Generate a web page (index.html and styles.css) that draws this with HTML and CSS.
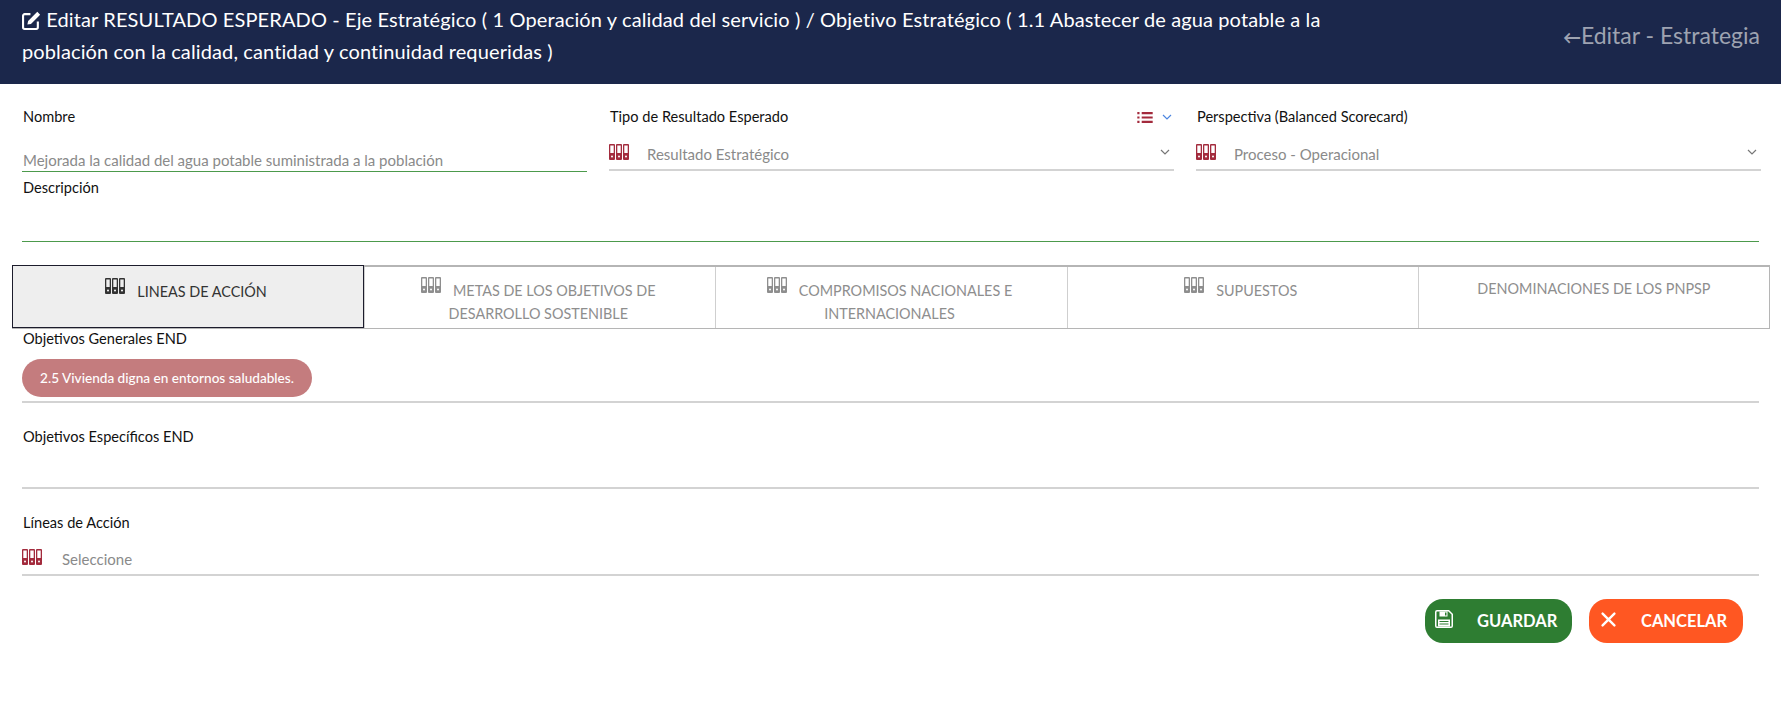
FILE: index.html
```html
<!DOCTYPE html>
<html lang="es">

<head>
    <meta charset="UTF-8">
    <meta name="viewport" content="width=device-width, initial-scale=1.0">
    <title>Editar Resultado Esperado</title>

    <link rel="stylesheet" href="styles.css">
</head>

<body>

    <svg class="sprite" width="0" height="0">
        <symbol id="binders" viewBox="0 0 20 16">
            <path d="M1 0h4a1 1 0 0 1 1 1v14a1 1 0 0 1-1 1H1a1 1 0 0 1-1-1V1a1 1 0 0 1 1-1zm.3 1.500V9h3.400V1.500zM8 0h4a1 1 0 0 1 1 1v14a1 1 0 0 1-1 1H8a1 1 0 0 1-1-1V1a1 1 0 0 1 1-1zm.3 1.500V9h3.400V1.500zM15 0h4a1 1 0 0 1 1 1v14a1 1 0 0 1-1 1h-4a1 1 0 0 1-1-1V1a1 1 0 0 1 1-1zm.3 1.500V9h3.400V1.500z" fill-rule="evenodd" />
            <circle cx="3" cy="12.500" r="1" fill="#fff" />
            <circle cx="10" cy="12.500" r="1" fill="#fff" />
            <circle cx="17" cy="12.500" r="1" fill="#fff" />
        </symbol>
        <symbol id="chevron" viewBox="0 0 10 6">
            <path d="M1 1l4 4 4-4" fill="none" stroke="currentColor" stroke-width="1.200" />
        </symbol>
    </svg>

    <header class="cabecera">
        <h1 class="titulo">
            <svg class="icono-editar" viewBox="0 0 18 18">
                <path d="M8 3H2.500A1.500 1.500 0 0 0 1 4.500v11A1.500 1.500 0 0 0 2.500 17h11a1.500 1.500 0 0 0 1.500-1.500V10" fill="none" stroke="currentColor" stroke-width="2" />
                <path d="M14.500.8l2.700 2.700L8.500 12.200l-3.400.7.700-3.400z" fill="currentColor" />
            </svg>
            Editar RESULTADO ESPERADO - Eje Estratégico ( 1 Operación y calidad del servicio ) / Objetivo Estratégico ( 1.1 Abastecer de agua potable a la población con la calidad, cantidad y continuidad requeridas )
        </h1>
        <a class="volver" href="#"><span class="flecha">←</span>Editar - Estrategia</a>
    </header>

    <main class="contenido">

        <section class="fila">
            <div class="campo">
                <label class="etiqueta">Nombre</label>
                <div class="valor valor-texto">Mejorada la calidad del agua potable suministrada a la población</div>
            </div>

            <div class="campo">
                <div class="etiqueta etiqueta-acciones">
                    <label>Tipo de Resultado Esperado</label>
                    <span class="acciones">
                        <svg class="icono-lista" viewBox="0 0 14 10">
                            <path d="M0 0h2v2H0zM4 0h10v2H4zM0 4h2v2H0zM4 4h10v2H4zM0 8h2v2H0zM4 8h10v2H4z" />
                        </svg>
                        <svg class="chevron chevron-azul"><use href="#chevron" /></svg>
                    </span>
                </div>
                <div class="valor valor-select">
                    <svg class="binders"><use href="#binders" /></svg>
                    <span class="valor-nombre">Resultado Estratégico</span>
                    <svg class="chevron"><use href="#chevron" /></svg>
                </div>
            </div>

            <div class="campo">
                <label class="etiqueta">Perspectiva (Balanced Scorecard)</label>
                <div class="valor valor-select">
                    <svg class="binders"><use href="#binders" /></svg>
                    <span class="valor-nombre">Proceso - Operacional</span>
                    <svg class="chevron"><use href="#chevron" /></svg>
                </div>
            </div>
        </section>

        <section class="descripcion">
            <label class="etiqueta">Descripción</label>
        </section>

        <nav class="pestanas">
            <a class="pestana activa" href="#"><svg class="binders"><use href="#binders" /></svg>LINEAS DE ACCIÓN</a>
            <a class="pestana" href="#"><svg class="binders"><use href="#binders" /></svg>METAS DE LOS OBJETIVOS DE DESARROLLO SOSTENIBLE</a>
            <a class="pestana" href="#"><svg class="binders"><use href="#binders" /></svg>COMPROMISOS NACIONALES E INTERNACIONALES</a>
            <a class="pestana" href="#"><svg class="binders"><use href="#binders" /></svg>SUPUESTOS</a>
            <a class="pestana" href="#">DENOMINACIONES DE LOS PNPSP</a>
        </nav>

        <section class="bloque bloque-generales">
            <label class="etiqueta">Objetivos Generales END</label>
            <div class="selector">
                <span class="chip">2.5 Vivienda digna en entornos saludables.</span>
            </div>
        </section>

        <section class="bloque bloque-especificos">
            <label class="etiqueta">Objetivos Específicos END</label>
            <div class="selector selector-vacio"></div>
        </section>

        <section class="bloque bloque-lineas">
            <label class="etiqueta">Líneas de Acción</label>
            <div class="selector selector-icono">
                <svg class="binders"><use href="#binders" /></svg>
                <span class="valor-nombre">Seleccione</span>
            </div>
        </section>

        <div class="botones">
            <button class="boton boton-guardar">
                <svg class="boton-icono icono-guardar" viewBox="0 0 18 18">
                    <path d="M2 0h12l4 4v12a2 2 0 0 1-2 2H2a2 2 0 0 1-2-2V2a2 2 0 0 1 2-2zm0 1.500a.5.5 0 0 0-.5.5v14a.5.5 0 0 0 .5.5h14a.5.5 0 0 0 .5-.5V4.600l-3.100-3.100z" fill="currentColor" fill-rule="evenodd" />
                    <path d="M4.500 1.500h8v5h-8zM10 2.500v3h1.500v-3zM3 9.500h12v7H3zM4.500 11v1h9v-1zm0 2.500v1h9v-1z" fill="currentColor" fill-rule="evenodd" />
                </svg>
                GUARDAR
            </button>
            <button class="boton boton-cancelar">
                <svg class="boton-icono icono-cancelar" viewBox="0 0 14 14">
                    <path d="M1.500 1.500l11 11M12.500 1.500l-11 11" stroke="currentColor" stroke-width="2.200" stroke-linecap="round" fill="none" />
                </svg>
                CANCELAR
            </button>
        </div>

    </main>

</body>

</html>
```

FILE: styles.css
```css
* {
    margin: 0;
    padding: 0;
    box-sizing: border-box;
}

body {
    background-color: #fff;
    color: #111;
    font-family: "Lato", "Noto Sans", sans-serif;
    font-size: 14px;
}

.sprite {
    position: absolute;
}

.cabecera {
    height: 84px;
    background-color: #1b274b;
    color: #fff;
    display: flex;
    justify-content: space-between;
    padding: 3px 21px 0 22px;
}

.titulo {
    width: 1340px;
    font-size: 20px;
    font-weight: 400;
    letter-spacing: .12px;
    line-height: 32px;
}

.icono-editar {
    width: 19px;
    height: 19px;
    vertical-align: -3px;
}

.volver {
    color: #9ea3b1;
    font-size: 23px;
    text-decoration: none;
    line-height: 64px;
}

.flecha {
    font-size: 18px;
    font-weight: 700;
}

.contenido {
    padding: 0 11px;
}

.fila {
    display: grid;
    grid-template-columns: repeat(3, 565px);
    gap: 22px;
    padding: 24px 11px 0;
}

.etiqueta {
    display: block;
    height: 18px;
    line-height: 18px;
    font-size: 14.600px;
    padding-left: 1px;
}

.etiqueta-acciones {
    display: flex;
    justify-content: space-between;
    align-items: center;
    padding-right: 2px;
}

.acciones {
    display: flex;
    align-items: center;
    gap: 9px;
}

.icono-lista {
    width: 16px;
    height: 11px;
    fill: #a32b3d;
}

.chevron {
    width: 10px;
    height: 6px;
    color: #777;
}

.chevron-azul {
    color: #4d86e0;
}

.valor {
    color: #8a8a8a;
    font-size: 15px;
}

.valor-texto {
    height: 25px;
    margin-top: 21px;
    line-height: 27px;
    padding-left: 1px;
    border-bottom: 1px solid #4c9a4c;
}

.valor-select {
    height: 28px;
    margin-top: 17px;
    display: flex;
    align-items: center;
    padding: 0 4px 8px 0;
    border-bottom: 2px solid #d3d3d3;
}

.binders {
    width: 20px;
    height: 16px;
    fill: #a32b3d;
    flex: none;
}

.valor-nombre {
    margin-left: 18px;
    padding-top: 3px;
    flex: 1;
}

.descripcion {
    margin: 7px 11px 0;
    height: 63px;
    border-bottom: 1px solid #4c9a4c;
}

.pestanas {
    margin: 23px 0 0 1px;
    width: 1758px;
    display: grid;
    grid-template-columns: repeat(5, 1fr);
    border: 1px solid #b5b5b5;
    border-top-width: 2px;
}

.pestana {
    height: 61px;
    padding: 10px 24px 0 20px;
    text-align: center;
    font-size: 14.400px;
    line-height: 23px;
    color: #8e8e8e;
    text-decoration: none;
    border-left: 1px solid #cfcfcf;
}

.pestana:last-child {
    padding-right: 20px;
}

.pestana .binders {
    fill: #8e8e8e;
    margin-right: 12px;
    vertical-align: 3px;
}

.activa {
    height: 63px;
    margin: -2px 0 -1px -1px;
    padding-top: 12px;
    background-color: #eee;
    border: 1px solid #1c1c2c;
    color: #333;
}

.activa .binders {
    fill: #333;
}

.bloque {
    margin: 0 11px;
}

.bloque-generales {
    margin-top: 1px;
}

.bloque-especificos {
    margin-top: 25px;
}

.bloque-lineas {
    margin-top: 25px;
}

.selector {
    border-bottom: 2px solid #d3d3d3;
}

.bloque-generales .selector {
    padding: 11px 0 4px;
}

.chip {
    display: inline-block;
    height: 38px;
    width: 290px;
    line-height: 38px;
    text-align: center;
    background-color: #c47c7e;
    color: #fff;
    font-size: 13.600px;
    font-weight: 500;
    border-radius: 19px;
}

.selector-vacio {
    height: 43px;
}

.selector-icono {
    height: 44px;
    display: flex;
    align-items: center;
    padding-top: 8px;
    color: #8a8a8a;
    font-size: 15px;
}

.selector-icono .valor-nombre {
    margin-left: 20px;
}

.botones {
    display: flex;
    justify-content: flex-end;
    gap: 17px;
    margin: 23px 27px 0 0;
}

.boton {
    height: 44px;
    border: none;
    border-radius: 18px;
    color: #fff;
    font-family: inherit;
    font-size: 16.500px;
    font-weight: 700;
    display: flex;
    align-items: center;
    padding-left: 10px;
    cursor: pointer;
}

.boton-guardar {
    width: 147px;
    background-color: #2e7d32;
}

.boton-cancelar {
    width: 154px;
    background-color: #ff5722;
}

.boton-icono {
    margin-bottom: 4px;
}

.icono-guardar {
    width: 18px;
    height: 18px;
    margin-right: 24px;
}

.icono-cancelar {
    width: 15px;
    height: 15px;
    margin: 0 25px 4px 2px;
}
```
